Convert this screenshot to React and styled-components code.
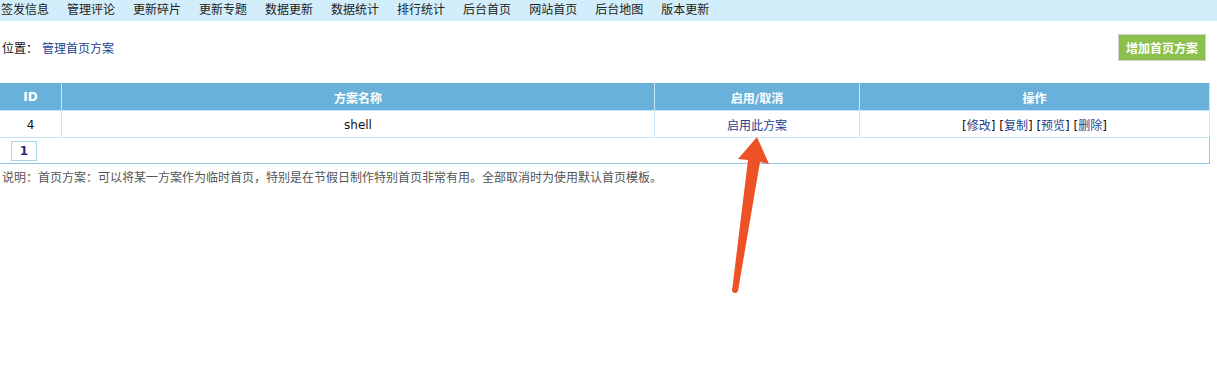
import React from 'react';
import styled, { createGlobalStyle } from 'styled-components';

const GlobalStyle = createGlobalStyle`
  body {
    margin: 0;
    background: #fff;
    font-family: "DejaVu Sans", Verdana, "Noto Sans CJK SC", sans-serif;
    font-size: 12px;
    color: #222;
  }
`;

const Page = styled.div`
  position: relative;
  width: 1217px;
  height: 389px;
  overflow: hidden;
`;

const NavBar = styled.div`
  display: flex;
  height: 21px;
  line-height: 21px;
  background: #d3eefb;
  padding-left: 1px;
  gap: 18px;
`;

const NavItem = styled.a`
  font-size: 12px;
  color: #222;
  text-decoration: none;
  white-space: nowrap;
`;

const TopRow = styled.div`
  display: flex;
  align-items: center;
  justify-content: space-between;
  padding: 13px 11px 21px 2px;
`;

const Crumb = styled.div`
  font-size: 12px;
  color: #111;
`;

const Link = styled.a`
  color: #1d3f91;
  text-decoration: none;
  margin-left: ${(p) => (p.$gap ? `${p.$gap}px` : '0')};
`;

const AddButton = styled.button`
  height: 27px;
  padding: 0 7px;
  background: #8cc04d;
  border: 1px solid #cfcfcf;
  color: #fff;
  font-family: inherit;
  font-size: 12px;
  font-weight: bold;
  cursor: pointer;
`;

const Table = styled.table`
  width: 1210px;
  border-collapse: collapse;
  border: 1px solid #8fcbea;
  border-left: none;
  font-size: 12px;
`;

const Th = styled.th`
  height: 26px;
  padding: 1px 0 0;
  background: #69b1db;
  color: #fff;
  font-weight: bold;
  text-align: center;
  border: 1px solid #c6e5f6;
  border-top: 1px solid #ffffff;
  width: ${(p) => (p.$w ? `${p.$w}px` : 'auto')};
  &:first-child { border-left: none; }
`;

const Td = styled.td`
  height: 25px;
  padding: 1px 0 0;
  text-align: ${(p) => p.$align || 'center'};
  border: 1px solid #c6e5f6;
  color: #111;
  &:first-child { border-left: none; }
`;

const PagerCell = styled.td`
  height: 25px;
  padding: 0 0 0 11px;
  border-bottom: 1px solid #8fcbea;
`;

const PageBox = styled.span`
  display: inline-block;
  width: 24px;
  height: 18px;
  line-height: 18px;
  text-align: center;
  border: 1px solid #a9d4ee;
  color: #1d2f8a;
  font-weight: bold;
`;

const Note = styled.p`
  margin: 4px 0 0 2px;
  font-size: 12px;
  color: #555;
`;

const ArrowLayer = styled.svg`
  position: absolute;
  left: 0;
  top: 0;
  pointer-events: none;
`;

const navItems = ['签发信息', '管理评论', '更新碎片', '更新专题', '数据更新', '数据统计', '排行统计', '后台首页', '网站首页', '后台地图', '版本更新'];

const App = () => (
  <Page>
    <GlobalStyle />
    <NavBar>
      {navItems.map((n) => (
        <NavItem key={n} href="#">{n}</NavItem>
      ))}
    </NavBar>
    <TopRow>
      <Crumb>
        位置：<Link href="#" $gap={4}>管理首页方案</Link>
      </Crumb>
      <AddButton>增加首页方案</AddButton>
    </TopRow>
    <Table>
      <thead>
        <tr>
          <Th $w={61}>ID</Th>
          <Th>方案名称</Th>
          <Th $w={204}>启用/取消</Th>
          <Th $w={349}>操作</Th>
        </tr>
      </thead>
      <tbody>
        <tr>
          <Td>4</Td>
          <Td>shell</Td>
          <Td><Link href="#">启用此方案</Link></Td>
          <Td>
            [<Link href="#">修改</Link>]&nbsp;[<Link href="#">复制</Link>]&nbsp;[<Link href="#">预览</Link>]&nbsp;[<Link href="#">删除</Link>]
          </Td>
        </tr>
        <tr>
          <PagerCell colSpan={4}>
            <PageBox>1</PageBox>
          </PagerCell>
        </tr>
      </tbody>
    </Table>
    <Note>说明：首页方案：可以将某一方案作为临时首页，特别是在节假日制作特别首页非常有用。全部取消时为使用默认首页模板。</Note>
    <ArrowLayer width="1217" height="389">
      <polygon points="757,137 769,164 760,162 738,291 732,291 748,160 738,159" fill="#ee5125" />
      <circle cx="735" cy="290" r="3" fill="#ee5125" />
    </ArrowLayer>
  </Page>
);

export default App;
